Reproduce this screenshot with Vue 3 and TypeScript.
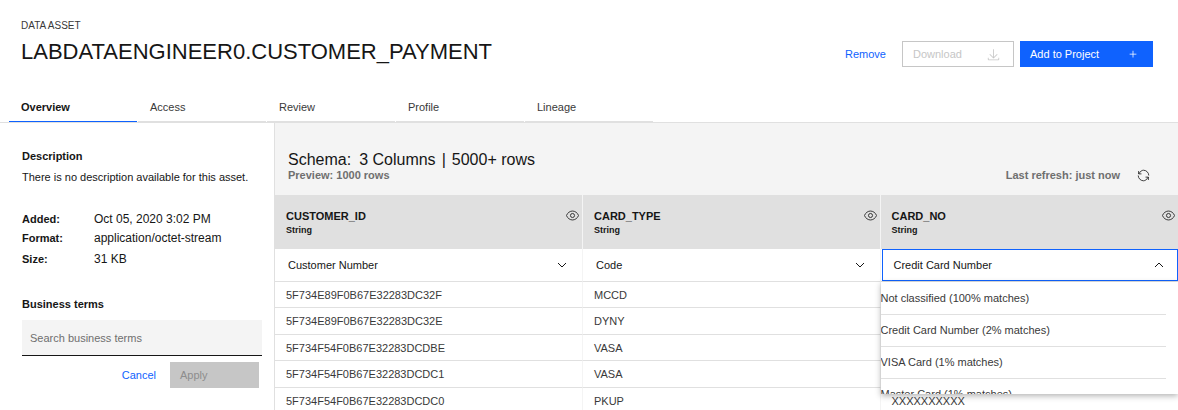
<script setup lang="ts">
import { ref } from 'vue'

interface Column {
  name: string
  type: string
  category: string
  open: boolean
}

const tabs: string[] = ['Overview', 'Access', 'Review', 'Profile', 'Lineage']
const activeTab = ref<string>('Overview')

const columns = ref<Column[]>([
  { name: 'CUSTOMER_ID', type: 'String', category: 'Customer Number', open: false },
  { name: 'CARD_TYPE', type: 'String', category: 'Code', open: false },
  { name: 'CARD_NO', type: 'String', category: 'Credit Card Number', open: true },
])

const matches: string[] = [
  'Not classified (100% matches)',
  'Credit Card Number (2% matches)',
  'VISA Card (1% matches)',
  'Master Card (1% matches)',
]

const rows: string[][] = [
  ['5F734E89F0B67E32283DC32F', 'MCCD', ''],
  ['5F734E89F0B67E32283DC32E', 'DYNY', ''],
  ['5F734F54F0B67E32283DCDBE', 'VASA', ''],
  ['5F734F54F0B67E32283DCDC1', 'VASA', ''],
  ['5F734F54F0B67E32283DCDC0', 'PKUP', 'XXXXXXXXXX'],
]

const term = ref<string>('')
</script>

<template>
  <div class="page">
    <header class="head">
      <div class="titles">
        <p class="kicker">DATA ASSET</p>
        <h1>LABDATAENGINEER0.CUSTOMER_PAYMENT</h1>
      </div>
      <div class="actions">
        <button type="button" class="btn ghost">Remove</button>
        <button type="button" class="btn outline" disabled>
          <span>Download</span>
          <svg width="13" height="13" viewBox="0 0 32 32" fill="currentColor" aria-hidden="true">
            <path d="M26 16 24.6 14.6 17 22.2V3h-2v19.2L7.4 14.6 6 16l10 10z" />
            <path d="M28 24v4H4v-4H2v4a2 2 0 0 0 2 2h24a2 2 0 0 0 2-2v-4z" />
          </svg>
        </button>
        <button type="button" class="btn primary">
          <span>Add to Project</span>
          <svg width="12" height="12" viewBox="0 0 32 32" fill="currentColor" aria-hidden="true">
            <path d="M17 15V7h-2v8H7v2h8v8h2v-8h8v-2z" />
          </svg>
        </button>
      </div>
    </header>

    <nav class="tabs" role="tablist">
      <button
        v-for="tab in tabs"
        :key="tab"
        type="button"
        role="tab"
        class="tab"
        :class="{ active: tab === activeTab }"
        :aria-selected="tab === activeTab"
        @click="activeTab = tab"
      >{{ tab }}</button>
    </nav>

    <div class="body">
      <aside class="side">
        <h2>Description</h2>
        <p class="desc">There is no description available for this asset.</p>
        <dl>
          <dt>Added:</dt>
          <dd>Oct 05, 2020 3:02 PM</dd>
          <dt>Format:</dt>
          <dd>application/octet-stream</dd>
          <dt>Size:</dt>
          <dd>31 KB</dd>
        </dl>
        <label for="terms" class="terms-label">Business terms</label>
        <input id="terms" v-model="term" type="text" placeholder="Search business terms" />
        <div class="side-actions">
          <button type="button" class="btn ghost">Cancel</button>
          <button type="button" class="btn apply" disabled>Apply</button>
        </div>
      </aside>

      <main class="main">
        <div class="schema">
          <div>
            <h2 class="schema-title">
              <span>Schema:</span><span class="count">3 Columns</span><span class="bar">|</span><span>5000+ rows</span>
            </h2>
            <p class="note">Preview: 1000 rows</p>
          </div>
          <div class="refresh">
            <p class="note">Last refresh: just now</p>
            <button type="button" class="icon-btn" aria-label="Refresh">
              <svg width="13" height="13" viewBox="0 0 32 32" fill="none" stroke="currentColor" stroke-width="2" aria-hidden="true">
                <path d="M4 5v7h7" />
                <path d="M4 12C8 6 12 3 16 3c7 0 13 6 13 13" />
                <path d="M28 27v-7h-7" />
                <path d="M28 20C24 26 20 29 16 29 9 29 3 23 3 16" />
              </svg>
            </button>
          </div>
        </div>

        <table>
          <colgroup>
            <col class="c-first" />
            <col />
            <col />
          </colgroup>
          <thead>
            <tr class="names">
              <th v-for="col in columns" :key="col.name" scope="col">
                <div class="th-in">
                  <div>
                    <div class="col-name">{{ col.name }}</div>
                    <div class="col-type">{{ col.type }}</div>
                  </div>
                  <button type="button" class="icon-btn eye" :aria-label="`View ${col.name}`">
                    <svg width="13" height="13" viewBox="0 0 32 32" fill="none" stroke="currentColor" stroke-width="2" aria-hidden="true">
                      <path d="M1 16C4 9 10 5 16 5s12 4 15 11c-3 7-9 11-15 11S4 23 1 16z" />
                      <circle cx="16" cy="16" r="5" />
                    </svg>
                  </button>
                </div>
              </th>
            </tr>
            <tr class="kinds">
              <td v-for="col in columns" :key="col.name">
                <div v-if="!col.open" class="pick">
                  <select v-model="col.category" :aria-label="`${col.name} data class`">
                    <option>{{ col.category }}</option>
                  </select>
                  <svg class="chev" width="10" height="10" viewBox="0 0 10 10" fill="none" stroke="currentColor" aria-hidden="true">
                    <path d="M1 3l4 4 4-4" />
                  </svg>
                </div>
                <div v-else class="pick">
                  <button
                    type="button"
                    class="combo"
                    role="combobox"
                    aria-expanded="true"
                    aria-controls="matches"
                    :aria-label="`${col.name} data class`"
                  >
                    <span>{{ col.category }}</span>
                    <svg width="10" height="10" viewBox="0 0 10 10" fill="none" stroke="currentColor" aria-hidden="true">
                      <path d="M1 7l4-4 4 4" />
                    </svg>
                  </button>
                  <ul id="matches" class="menu" role="listbox">
                    <li v-for="m in matches" :key="m" role="option">{{ m }}</li>
                  </ul>
                </div>
              </td>
            </tr>
          </thead>
          <tbody>
            <tr v-for="row in rows" :key="row[0]">
              <td v-for="(cell, i) in row" :key="i">{{ cell }}</td>
            </tr>
          </tbody>
        </table>
      </main>
    </div>
  </div>
</template>

<style>
body {
  margin: 0;
  background: #fff;
}
</style>

<style scoped>
.page,
.page * {
  box-sizing: border-box;
}
.page {
  height: 100vh;
  overflow: hidden;
  display: flex;
  flex-direction: column;
  font-family: "Liberation Sans", Arial, sans-serif;
  font-size: 11px;
  line-height: 16px;
  color: #161616;
}
h1, h2, p, dl, dd, ul {
  margin: 0;
  padding: 0;
}
button, input, select {
  font: inherit;
  margin: 0;
  border: 0;
  border-radius: 0;
}
svg {
  display: block;
  flex: none;
}
.head {
  flex: none;
  display: flex;
  justify-content: space-between;
  align-items: flex-start;
  height: 92px;
  padding: 18px 25px 0 21px;
}
.kicker {
  font-size: 10px;
  color: #393939;
}
h1 {
  margin-top: 4px;
  font-size: 22px;
  line-height: 28px;
  font-weight: 400;
}
.actions {
  display: flex;
  gap: 6px;
  padding-top: 23px;
}
.btn {
  display: flex;
  align-items: center;
  justify-content: space-between;
  height: 26px;
  padding: 0 10px;
}
.ghost {
  background: none;
  color: #0f62fe;
}
.outline {
  width: 112px;
  padding-right: 13px;
  border: 1px solid #c6c6c6;
  background: #fff;
  color: #c6c6c6;
}
.primary {
  width: 133px;
  padding-right: 14px;
  background: #0f62fe;
  color: #fff;
}
.tabs {
  flex: none;
  display: flex;
  gap: 1px;
  height: 31px;
  padding-left: 9px;
  border-bottom: 1px solid #e0e0e0;
}
.tab {
  width: 128px;
  padding: 0 12px;
  background: none;
  border-bottom: 1px solid #e0e0e0;
  text-align: left;
  color: #393939;
}
.tab.active {
  border-bottom-color: #0f62fe;
  font-weight: 700;
  color: #161616;
}
.body {
  flex: 1;
  min-height: 0;
  display: flex;
}
.side {
  flex: none;
  width: 275px;
  padding: 25px 12px 0 22px;
  border-right: 1px solid #e0e0e0;
}
.side h2,
.terms-label {
  display: block;
  font-size: 11px;
  line-height: 16px;
  font-weight: 700;
}
.desc {
  margin-top: 5px;
  white-space: nowrap;
}
dl {
  display: grid;
  grid-template-columns: 72px 1fr;
  grid-template-rows: 19px 20px 22px;
  align-items: center;
  margin-top: 24px;
}
dt {
  font-weight: 700;
}
dd {
  font-size: 12px;
}
.terms-label {
  margin-top: 26px;
}
input {
  display: block;
  width: 100%;
  height: 36px;
  margin-top: 8px;
  padding: 0 8px;
  background: #f4f4f4;
  border-bottom: 1px solid #161616;
  color: #161616;
}
input::placeholder {
  color: #6f6f6f;
  opacity: 1;
}
.side-actions {
  display: flex;
  justify-content: flex-end;
  gap: 4px;
  padding: 6px 3px 0 0;
}
.apply {
  width: 89px;
  background: #c6c6c6;
  color: #8d8d8d;
}
.main {
  flex: 1;
  min-width: 0;
}
.schema {
  display: flex;
  justify-content: space-between;
  align-items: flex-end;
  height: 72px;
  padding: 0 28px 12px 13px;
  background: #f4f4f4;
}
.schema-title {
  font-size: 16px;
  line-height: 16px;
  font-weight: 400;
}
.count {
  margin-left: 8px;
}
.bar {
  margin: 0 6px;
}
.note {
  line-height: 15px;
  font-weight: 700;
  color: #6f6f6f;
}
.refresh {
  display: flex;
  align-items: center;
  gap: 17px;
}
.icon-btn {
  padding: 0;
  background: none;
  color: #161616;
}
table {
  width: 100%;
  table-layout: fixed;
  border-collapse: separate;
  border-spacing: 0;
}
.c-first {
  width: 308px;
}
th, td {
  padding: 0;
  text-align: left;
  border-right: 1px solid #f4f4f4;
}
th:last-child, td:last-child {
  border-right: 0;
}
.names th {
  height: 54px;
  background: #e0e0e0;
  vertical-align: top;
}
.th-in {
  display: flex;
  justify-content: space-between;
  align-items: flex-start;
  padding: 14px 3px 0 11px;
}
.col-name {
  line-height: 14px;
}
.col-type {
  font-size: 9px;
  line-height: 14px;
}
.kinds td {
  height: 33px;
  border-bottom: 1px solid #e0e0e0;
}
.pick {
  position: relative;
  height: 32px;
}
select {
  appearance: none;
  width: 100%;
  height: 32px;
  padding: 0 32px 0 13px;
  background: #fff;
  color: #161616;
}
.chev {
  position: absolute;
  right: 15px;
  top: 11px;
  pointer-events: none;
}
.combo {
  display: flex;
  align-items: center;
  justify-content: space-between;
  width: calc(100% - 1px);
  height: 32px;
  margin-left: 1px;
  padding: 0 13px 0 11px;
  background: #fff;
  border: 1px solid #0f62fe;
  color: #161616;
}
.menu {
  position: absolute;
  z-index: 2;
  top: 33px;
  left: 0;
  right: 0;
  max-height: 112px;
  overflow: hidden;
  padding: 1px 12px 0 0;
  background: #fff;
  box-shadow: 0 2px 6px rgba(0, 0, 0, 0.3);
  list-style: none;
}
.menu li {
  height: 32px;
  line-height: 30px;
  border-bottom: 1px solid #e0e0e0;
  color: #393939;
}
tbody td {
  height: 26px;
  padding-left: 11px;
  border-bottom: 1px solid #e0e0e0;
  color: #393939;
}
tbody tr:nth-child(even) td {
  height: 27px;
}
</style>
